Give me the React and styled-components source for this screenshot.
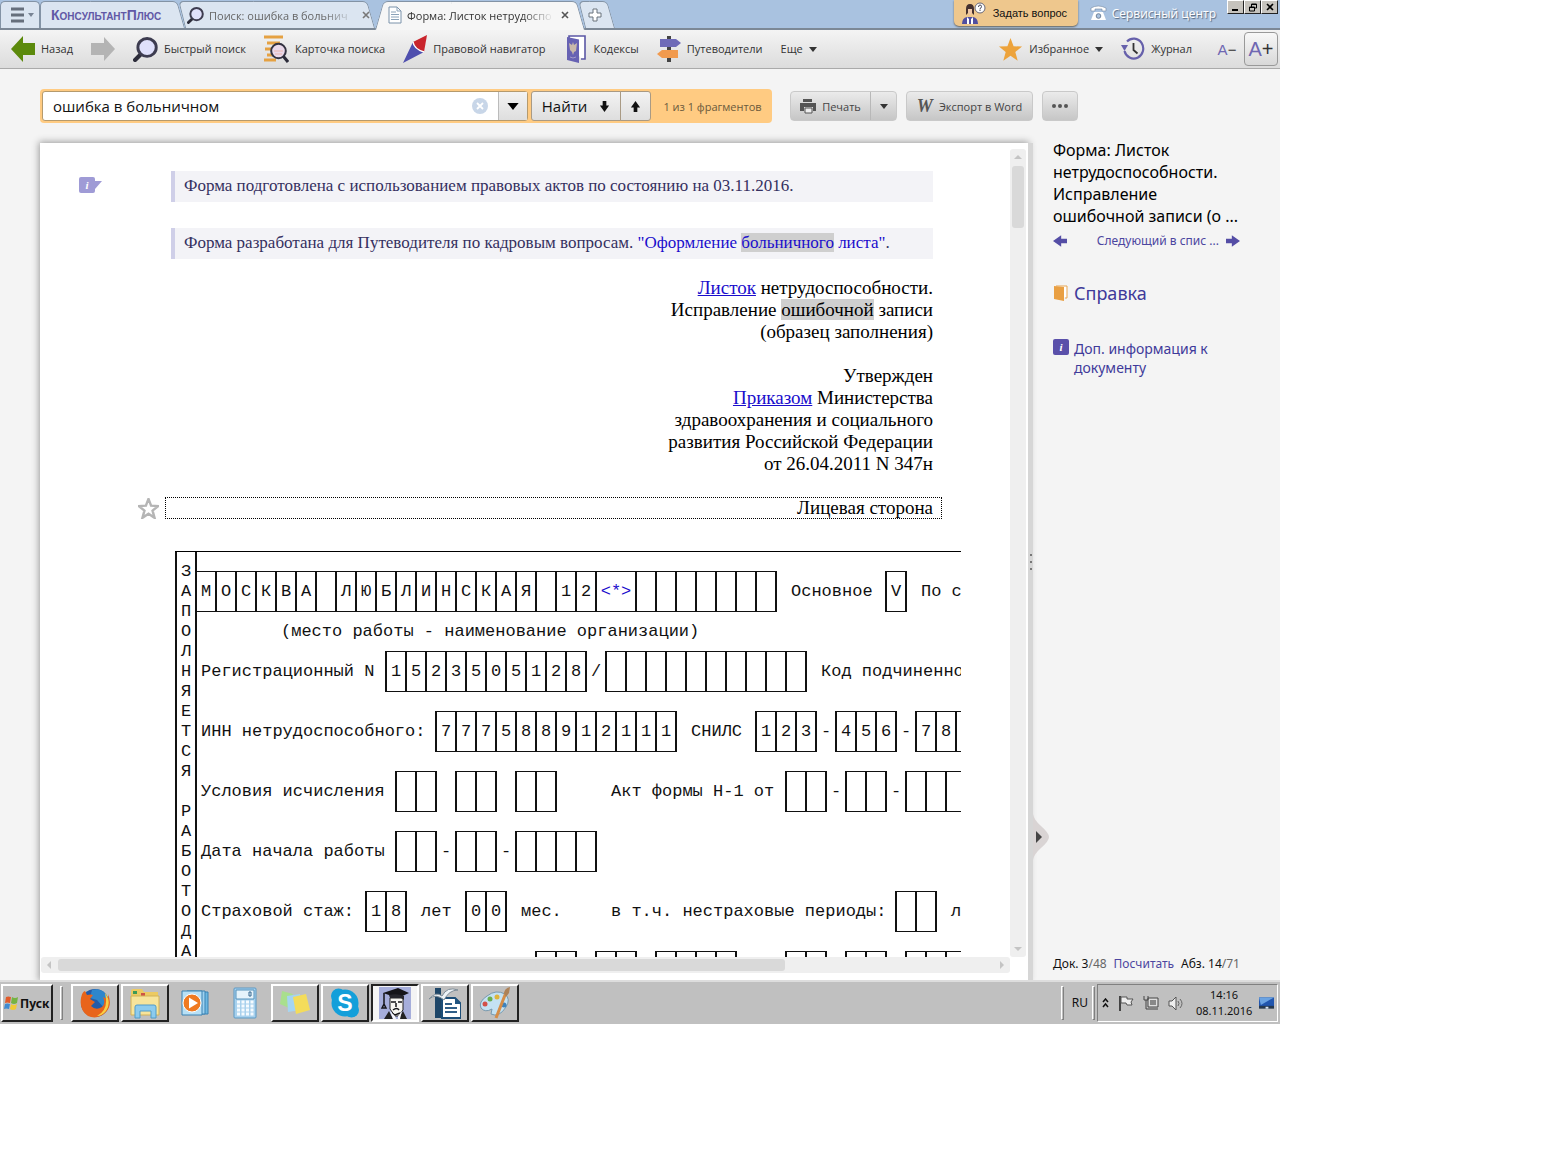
import React from "react";
import styled, { createGlobalStyle, css } from "styled-components";

const ui = `"Open Sans", "Noto Sans", sans-serif`;
const side = `"Noto Sans", "Open Sans", sans-serif`;
const serif = `"Liberation Serif", "Times New Roman", serif`;
const mono = `"Liberation Mono", "Courier New", monospace`;

const GlobalStyle = createGlobalStyle`
  * { box-sizing: border-box; }
  body { margin: 0; background: #fff; font-family: ${ui}; color: #333; }
  button, input { font: inherit; color: inherit; }
  button { padding: 0; border: 0; background: none; cursor: pointer; white-space: nowrap; }
  a { text-decoration: none; }
  svg { display: block; flex: none; }
`;

const Screen = styled.div`
  display: flex;
  flex-direction: column;
  max-width: 1280px;
  height: min(1024px, 100vh);
  background: #f4f4f4;
  overflow: hidden;
`;

/* ---------- title bar ---------- */

const TitleBar = styled.header`
  display: flex;
  flex: none;
  height: 30px;
  background: #a9c2e0;
  border-bottom: 2px solid #7c8896;
`;

const tabBack = css`
  content: "";
  position: absolute;
  z-index: -1;
  top: 1px;
  bottom: ${(p) => (p.$active ? "-2px" : "0")};
  border-top: 1px solid #8393a5;
  background: ${(p) => (p.$active ? "#f6f6f6" : "#dbe5f1")};
`;

const Tab = styled.div`
  position: relative;
  isolation: isolate;
  z-index: ${(p) => (p.$active ? 3 : 1)};
  display: flex;
  align-items: center;
  gap: 5px;
  width: ${(p) => p.$w}px;
  padding-left: ${(p) => p.$pad || 0}px;
  padding-top: 2px;
  font-size: 11px;
  color: ${(p) => (p.$active ? "#333" : "#666")};
  &::before {
    ${tabBack}
    left: 0;
    right: 50%;
    border-left: 1px solid #8393a5;
    border-radius: 5px 0 0 0;
    transform: skewX(${(p) => (p.$straightLeft ? 0 : p.$leanIn ? 14 : -16)}deg);
    transform-origin: bottom;
  }
  &::after {
    ${tabBack}
    right: 0;
    left: 40%;
    border-right: 1px solid #8393a5;
    border-radius: 0 5px 0 0;
    transform: skewX(${(p) => (p.$straight ? 0 : 16)}deg);
    transform-origin: bottom;
  }
`;

const TabText = styled.span`
  width: 144px;
  white-space: nowrap;
  mask-image: linear-gradient(to right, #000 80%, transparent 102%);
`;

const TabClose = styled.button`
  display: grid;
  place-items: center;
  width: 18px;
  height: 18px;
`;

const Brand = styled.span`
  font: bold 14px "Liberation Sans Narrow", "Liberation Sans", sans-serif;
  font-variant: small-caps;
  color: #6158a6;
`;

const TitleRight = styled.div`
  display: flex;
  margin-left: auto;
`;

const AskButton = styled.button`
  display: flex;
  align-items: center;
  gap: 7px;
  width: 124px;
  height: 26px;
  padding-left: 7px;
  background: #eec78d;
  border-radius: 0 0 5px 5px;
  box-shadow: 0 1px 2px #66625a;
  font: 11px "Liberation Sans", Arial, sans-serif;
  color: #111;
`;

const ServiceLink = styled.a`
  display: flex;
  align-items: center;
  gap: 5px;
  height: 26px;
  margin-left: 12px;
  font-size: 12px;
  color: #fff;
  text-shadow: 1px 1px 1px #56677c;
  white-space: nowrap;
`;

const WindowButtons = styled.div`
  display: flex;
  height: 14px;
  margin: 0 2px 0 11px;
`;

const WindowButton = styled.button`
  display: grid;
  place-items: center;
  width: 17px;
  height: 14px;
  background: #c6c3bd;
  border: 1px solid;
  border-color: #fff #222 #222 #fff;
`;

/* ---------- toolbar ---------- */

const Toolbar = styled.nav`
  display: flex;
  flex: none;
  align-items: center;
  height: 39px;
  padding: 0 2px 0 11px;
  background: linear-gradient(#f4f4f4, #dcdcdc);
  border-bottom: 1px solid #aaa;
`;

const Tool = styled.button`
  display: flex;
  align-items: center;
  gap: 6px;
  margin-right: ${(p) => p.$after ?? 18}px;
  font-size: 11px;
  line-height: 20px;
  color: #333;
`;

const Push = styled.div`
  flex: 1;
`;

const SizeButton = styled.button`
  width: 34px;
  height: 34px;
  font: ${(p) => (p.$large ? 20 : 15)}px "Liberation Sans", Arial, sans-serif;
  color: #6f67b2;
  ${(p) =>
    p.$large &&
    css`
      border: 1px solid #999;
      border-radius: 4px;
      background: linear-gradient(#f8f8f8, #d8d8d8);
    `}
  b {
    font-weight: normal;
    color: #333;
  }
`;

/* ---------- search ---------- */

const SearchRow = styled.div`
  display: flex;
  flex: none;
  align-items: center;
  height: 34px;
  margin: 20px 40px;
`;

const SearchForm = styled.form`
  display: flex;
  flex: none;
  align-items: center;
  width: 732px;
  height: 34px;
  padding: 2px;
  margin-right: 18px;
  background: #ffcb82;
  border-radius: 4px;
`;

const Field = styled.div`
  display: flex;
  align-items: center;
  flex: 1;
  height: 30px;
  margin-right: 3px;
  background: #fff;
  border: 1px solid #b59a6d;
  border-radius: 3px;
`;

const SearchInput = styled.input`
  flex: 1;
  min-width: 0;
  height: 28px;
  padding: 0 10px;
  border: 0;
  outline: 0;
  background: none;
  font-size: 15px;
  color: #111;
`;

const ClearButton = styled.button`
  margin-right: 10px;
`;

const grey = css`
  display: flex;
  align-items: center;
  justify-content: center;
  background: linear-gradient(#f3f3f3, #dedede);
`;

const DropButton = styled.button`
  ${grey}
  width: 29px;
  height: 28px;
  border-left: 1px solid #bbb;
`;

const FindButton = styled.button`
  ${grey}
  gap: 12px;
  width: ${(p) => p.$w}px;
  height: 30px;
  border: 1px solid #a99a84;
  border-radius: ${(p) => (p.$end ? "0 3px 3px 0" : "3px 0 0 3px")};
  margin-left: ${(p) => (p.$end ? -1 : 0)}px;
  font-size: 15px;
  color: #111;
`;

const Fragments = styled.span`
  width: 119px;
  padding-left: 4px;
  text-align: center;
  font-size: 11px;
  color: #6b5a3c;
  white-space: nowrap;
`;

const ActionGroup = styled.div`
  display: flex;
  height: 30px;
  margin-right: 9px;
  background: linear-gradient(#ebebeb, #c6c6c6);
  border: 1px solid #c9c9c9;
  border-radius: 4px;
`;

const Action = styled.button`
  display: flex;
  align-items: center;
  justify-content: center;
  gap: 6px;
  width: ${(p) => p.$w}px;
  font-size: 11px;
  color: #444;
  & + & {
    border-left: 1px solid #b8b8b8;
  }
`;

const WordMark = styled.span`
  font: italic bold 18px ${serif};
  color: #555;
`;

/* ---------- workspace ---------- */

const Workspace = styled.main`
  display: flex;
  flex: 1;
  min-height: 0;
  padding-left: 40px;
`;

const Paper = styled.article`
  display: grid;
  flex: 1;
  min-width: 0;
  grid-template-columns: minmax(0, 1fr) 18px;
  grid-template-rows: minmax(0, 1fr) 23px;
  background: #fff;
  box-shadow: 0 0 7px 1px #999;
`;

const Content = styled.div`
  overflow: hidden;
  padding-top: 28px;
`;

const Line = styled.div`
  display: grid;
  grid-template-columns: 131px 762px;
`;

const NoteFlag = styled.button`
  display: flex;
  align-items: center;
  width: 22px;
  height: 16px;
  margin: 6px 0 0 39px;
`;

const InfoBadge = styled.span`
  display: grid;
  place-items: center;
  flex: none;
  width: 16px;
  height: 16px;
  border-radius: 2px;
  background: ${(p) => p.$color};
  font: italic bold 11px ${serif};
  color: #fff;
`;

const Note = styled.p`
  grid-column: 2;
  margin: 0 0 26px;
  padding: 0 9px 2px;
  border-left: 4px solid #cfcfe8;
  background: #f3f3f7;
  font: 17px/29px ${serif};
  color: #35305f;
  white-space: nowrap;
`;

const DocLink = styled.a`
  color: #1a0dcc;
  text-decoration: ${(p) => (p.$plain ? "none" : "underline")};
`;

const Mark = styled.mark`
  background: #cfcfcf;
  color: inherit;
`;

const RightBlock = styled.p`
  grid-column: 2;
  margin: ${(p) => (p.$first ? "-8px" : "0")} 0 22px;
  font: 19px/22px ${serif};
  color: #000;
  text-align: right;
`;

const FaceRow = styled.div`
  display: flex;
  align-items: center;
  width: 902px;
  padding-left: 98px;
  gap: 6px;
`;

const Face = styled.div`
  flex: 1;
  padding-right: 8px;
  border: 1px dotted #000;
  font: 19px/20px ${serif};
  color: #000;
  text-align: right;
`;

/* ---------- pre-drawn form ---------- */

const Sheet = styled.section`
  display: flex;
  width: 786px;
  margin: 32px 0 0 135px;
  border-top: 1px solid #000;
  overflow: hidden;
  font: 17px/20px ${mono};
  color: #111;
`;

const Spine = styled.div`
  display: flex;
  flex: none;
  flex-direction: column;
  align-items: center;
  width: 22px;
  padding-top: 10px;
  border: solid #111;
  border-width: 0 2px;
`;

const SpineLetter = styled.span`
  height: 20px;
`;

const SheetBody = styled.div`
  flex: 1;
  min-width: 0;
  margin-left: -2px;
  padding-top: 19px;
`;

const FormRow = styled.div`
  display: grid;
  grid-template-columns: repeat(84, 10px);
  align-items: center;
  height: ${(p) => (p.$short ? 39 : 41)}px;
  margin-bottom: ${(p) => p.$after ?? 19}px;
`;

const FormText = styled.span`
  grid-row: 1;
  grid-column: ${(p) => p.$at + 1} / span ${(p) => p.$len};
  margin-left: 6px;
  white-space: pre;
`;

const Boxes = styled.span`
  display: flex;
  grid-row: 1;
  grid-column: ${(p) => p.$at + 1} / span ${(p) => p.$len};
  height: 41px;
  margin-right: -2px;
  border: solid #111;
  border-width: 1px 2px 1px 0;
`;

const Box = styled.span`
  display: grid;
  place-items: center;
  flex: none;
  width: ${(p) => (p.$wide ? 40 : 20)}px;
  border-left: 2px solid #111;
  color: ${(p) => (p.$wide ? "#1a0dcc" : "inherit")};
`;

/* ---------- scroll bars ---------- */

const VScroll = styled.div`
  display: flex;
  flex-direction: column;
  align-items: center;
  justify-content: space-between;
  width: 16px;
  margin: 6px 0 0;
  background: #efefef;
  border-radius: 3px;
`;

const HScroll = styled.div`
  display: flex;
  align-items: center;
  justify-content: space-between;
  height: 16px;
  margin-left: 1px;
  background: #efefef;
  border-radius: 3px;
`;

const ScrollArrow = styled.button`
  display: grid;
  place-items: center;
  flex: none;
  width: 16px;
  height: 16px;
`;

const Thumb = styled.div`
  width: ${(p) => p.$w};
  height: ${(p) => p.$h};
  margin: ${(p) => (p.$vertical ? "1px 0 auto" : "0 auto 0 1px")};
  border-radius: 3px;
  background: #d9d9d9;
`;

const Splitter = styled.div`
  position: relative;
  z-index: 2;
  display: flex;
  flex: none;
  flex-direction: column;
  align-items: center;
  justify-content: center;
  gap: 5px;
  width: 5px;
  background: #d6d6d6;
`;

const Dot = styled.i`
  width: 2px;
  height: 2px;
  background: #777;
`;

const Collapse = styled.button`
  position: absolute;
  left: 5px;
  bottom: 120px;
`;

/* ---------- sidebar ---------- */

const Sidebar = styled.aside`
  display: flex;
  flex: none;
  flex-direction: column;
  width: 247px;
  padding: 0 40px 6px 20px;
  font-family: ${side};
`;

const DocTitle = styled.h1`
  margin: -4px 0 0;
  font: 16px/22px ${side};
  color: #000;
  white-space: nowrap;
`;

const Pager = styled.div`
  display: flex;
  align-items: center;
  margin-top: 5px;
  font-size: 12px;
  line-height: 18px;
`;

const SideLink = styled.a`
  color: #4c46a0;
  white-space: nowrap;
`;

const PagerText = styled(SideLink)`
  margin: 0 7px 0 auto;
`;

const SideItem = styled.a`
  display: flex;
  align-items: ${(p) => (p.$large ? "center" : "flex-start")};
  gap: 5px;
  margin-top: ${(p) => (p.$large ? 31 : 34)}px;
  font-size: ${(p) => (p.$large ? 18 : 14)}px;
  line-height: ${(p) => (p.$large ? 24 : 19)}px;
  color: #3f3a9a;
`;

const Counters = styled.div`
  display: flex;
  justify-content: space-between;
  margin-top: auto;
  font-size: 12px;
  line-height: 20px;
  color: #111;
  white-space: nowrap;
  i {
    font-style: normal;
    color: #666;
  }
`;

/* ---------- task bar ---------- */

const TaskBar = styled.footer`
  display: flex;
  flex: none;
  align-items: center;
  height: 44px;
  padding: 0 2px 0 1px;
  border-top: 2px solid #ddd;
  background: #c0c0c0;
`;

const raised = css`
  border: 2px solid;
  border-color: #fff #222 #222 #fff;
`;

const StartButton = styled.button`
  ${raised}
  display: flex;
  align-items: center;
  gap: 1px;
  width: 52px;
  height: 38px;
  font: bold 12px ${side};
  color: #111;
`;

const Ridge = styled.i`
  width: 3px;
  height: 34px;
  margin: 0 ${(p) => p.$r}px 0 ${(p) => p.$l}px;
  border: 1px solid;
  border-color: #fff #808080 #808080 #fff;
`;

const Task = styled.button`
  display: grid;
  place-items: center;
  width: 48px;
  height: 38px;
  margin-right: 2px;
  ${(p) => !p.$flat && raised}
  ${(p) =>
    p.$pressed &&
    css`
      background: #f4f4f4;
      border-color: #222 #fff #fff #222;
    `}
`;

const Lang = styled.span`
  font: 12px/20px ${side};
  color: #111;
`;

const Tray = styled.div`
  display: flex;
  align-items: center;
  width: 181px;
  height: 38px;
  padding-left: 4px;
  border: 1px solid;
  border-color: #808080 #fff #fff #808080;
  gap: 9px;
`;

const Clock = styled.time`
  margin: 0 -2px 0 4px;
  font: 11px/16px ${side};
  color: #111;
  text-align: center;
`;

/* ---------- drawings ---------- */

const Caret = ({ size = 8, color = "#333" }) => (
  <svg width={size} height={size / 2 + 1} viewBox="0 0 8 5">
    <path d="M0 0h8L4 5z" fill={color} />
  </svg>
);

const Magnifier = ({ size = 16 }) => (
  <svg width={size} height={size} viewBox="0 0 24 24">
    <path d="M7.5 16.5 2 22" stroke="#2c2c3a" strokeWidth="4" strokeLinecap="round" />
    <ellipse cx="13.5" cy="10" rx="8.8" ry="8.6" fill="#dfe0fb" stroke="#3d3c50" strokeWidth="2.8" />
  </svg>
);

const Cross = ({ color = "#777" }) => (
  <svg width="8" height="8" viewBox="0 0 8 8">
    <path d="M1 1l6 6M7 1L1 7" stroke={color} strokeWidth="1.6" />
  </svg>
);

const SheetIcon = () => (
  <svg width="14" height="18" viewBox="0 0 14 18">
    <path d="M1 1h8l4 4v12H1z" fill="#fff" stroke="#7a92aa" />
    <path d="M9 1v4h4M3 6h5M3 8.500h8M3 11h8M3 13.500h8" stroke="#8ba2b8" fill="none" />
  </svg>
);

const BigArrow = ({ color, flip }) => (
  <svg width="24" height="28" viewBox="0 0 24 28">
    <path
      d={flip ? "M24 14 13 2v6H0v12h13v6z" : "M0 14 12 1v7h12v12H12v7z"}
      fill={color}
    />
  </svg>
);

const CardIcon = () => (
  <svg width="25" height="28" viewBox="0 0 25 28">
    <path d="M0 2h19M3 8h13M1 14h9M3 20h7M0 25h12" stroke="#e5a142" strokeWidth="3" />
    <circle cx="14.500" cy="16" r="7.300" fill="#ead9ea" stroke="#333241" strokeWidth="2" />
    <path d="M10 16h9M11 19h7" stroke="#eab5ae" strokeWidth="1" />
    <path d="M19.500 21.500 24 27" stroke="#2c2c3a" strokeWidth="3" />
  </svg>
);

const CompassIcon = () => (
  <svg width="24" height="28" viewBox="0 0 24 28">
    <path d="M24 0 10 7q1 7 11 10z" fill="#c9242c" />
    <path d="M10 7Q11 14 21 17L0 28z" fill="#4f4fae" />
    <path d="M10 7q1 7 11 10" stroke="#fff" strokeWidth="1.500" fill="none" />
  </svg>
);

const CodexIcon = () => (
  <svg width="22" height="28" viewBox="0 0 22 28">
    <path d="M3 3V1h16v23h-4" fill="#fff" stroke="#5b57a5" strokeWidth="1.600" />
    <path d="M1 2l12 2.500V28L1 25z" fill="#6762b3" />
    <path d="M7 7l1 3 3-2-1 8-2 1-1 3-1-3-2-2-1-7 3 2z" fill="#c9b9aa" />
    <path d="M4 22q3 2 6 0" stroke="#a49cc8" fill="none" />
  </svg>
);

const SignIcon = () => (
  <svg width="24" height="26" viewBox="0 0 24 26">
    <path d="M12 0v26" stroke="#444" strokeWidth="4" />
    <path d="M3 3h16l5 4-5 4H3z" fill="#6f6bb8" />
    <path d="M21 14H5l-5 4 5 4h16z" fill="#f19a4e" />
  </svg>
);

const starPath = "M12 0l3.200 8.500 8.800.5-7 5.600 2.500 9L12 18.500 4.500 23.600l2.500-9L0 9l8.800-.5z";
const Star = ({ size = 25, fill = "#eda33b", stroke }) => (
  <svg width={size} height={size} viewBox="-1 -1 26 26">
    <path d={starPath} fill={fill} stroke={stroke} strokeWidth={stroke ? 3 : 0} />
  </svg>
);

const HistoryIcon = () => (
  <svg width="24" height="24" viewBox="0 0 24 24">
    <path d="M3.500 14A9.500 10 0 1 0 6 4.500" fill="none" stroke="#6660ab" strokeWidth="2.200" />
    <path d="M0 8h7l-3.500 6z" fill="#6660ab" />
    <path d="M12.500 6v7l4 3.500" fill="none" stroke="#333" strokeWidth="1.800" />
  </svg>
);

const PersonIcon = () => (
  <svg width="25" height="24" viewBox="0 0 25 24">
    <path d="M5 14V8q0-5 4-5 4 0 4 5v6l-2-2V8H7v4z" fill="#45312f" />
    <path d="M7 8h4v4l-2 2-2-2z" fill="#f0c8a8" />
    <path d="M1 23q0-6 5-7h6q5 1 5 7z" fill="#504ea0" />
    <path d="M6 16l3 3 3-3v7H6z" fill="#fff" />
    <path d="M8 18h2v5H8z" fill="#504ea0" />
    <circle cx="19" cy="7" r="5" fill="#fff" stroke="#667" />
    <path d="M17.500 6q0-2 1.500-2t1.500 1.500Q20.500 7 19 7.500v1M19 9v1" stroke="#445" fill="none" />
  </svg>
);

const PhoneIcon = () => (
  <svg width="17" height="16" viewBox="0 0 17 16">
    <path d="M1 6V3q7-4 15 0v3h-4V4H5v2z" fill="#fff" stroke="#7488a1" strokeWidth=".6" />
    <path d="M4 7h9l3 8H1z" fill="#fff" />
    <circle cx="8.500" cy="11" r="2.300" fill="#a9c2e0" stroke="#70839b" />
  </svg>
);

const FatArrow = ({ dir = "down", color = "#111", w = 11 }) => (
  <svg width={w} height={w} viewBox="0 0 12 12">
    <path
      transform={`rotate(${{ down: 0, left: 90, up: 180, right: 270 }[dir]} 6 6)`}
      d="M4 0h4v5h3l-5 7-5-7h3z"
      fill={color}
    />
  </svg>
);

const ClearIcon = () => (
  <svg width="16" height="16" viewBox="0 0 16 16">
    <circle cx="8" cy="8" r="8" fill="#c8d6e8" />
    <path d="M5 5l6 6M11 5l-6 6" stroke="#fff" strokeWidth="1.800" />
  </svg>
);

const PrinterIcon = () => (
  <svg width="16" height="15" viewBox="0 0 16 15">
    <path d="M3 0h9v3H3z" fill="#555" />
    <path d="M0 4h16v8h-3V8H4v4H0z" fill="#555" />
    <path d="M5 9h7v5H5z" fill="#eee" stroke="#555" />
  </svg>
);

const BookIcon = () => (
  <svg width="16" height="17" viewBox="0 0 16 17">
    <path d="M3 1h11v12h-2" fill="#fff" stroke="#e7a553" />
    <path d="M1 1l10 1v14L1 14z" fill="#e99f42" />
  </svg>
);

const icon = { width: 32, height: 32, viewBox: "0 0 32 32" };

const Firefox = () => (
  <svg {...icon}>
    <circle cx="16" cy="16" r="14" fill="#245ba8" />
    <path d="M13 3q10-3 15 6l-3 12-7-8-7-2z" fill="#2d86cc" />
    <path d="M2 11Q3 5 6 4l2 4q4-1 6 0l-3 4 5 3-4 4q5 5 11 1 4-4 1-10 6 4 5-3 5 12-3 19-8 7-17 3Q0 23 2 11z" fill="#e8641b" />
    <path d="M26 6q7 9 1 18-4 5-9 5 10-5 9-17z" fill="#f8cf45" />
  </svg>
);

const Folder = () => (
  <svg {...icon}>
    <path d="M2 4q0-2 2-2h9l2 3h14v22H2z" fill="#ecca62" />
    <path d="M4 4h4v3H4z" fill="#3d9a57" />
    <path d="M12 6h4v3h-4z" fill="#cf5346" />
    <path d="M2 9h28v19H2z" fill="#f7e49b" stroke="#d2b257" />
    <path d="M6 31V20q0-2 2-2h17q2 0 2 2v11h-5v-7H11v7z" fill="#8ccbee" stroke="#519cc9" />
  </svg>
);

const Media = () => (
  <svg {...icon}>
    <path d="M12 5h17v22H12z" fill="#6db8e2" stroke="#3a82b3" />
    <path d="M8 4h18v23H8z" fill="#9ed1ef" stroke="#3a82b3" />
    <path d="M3 4h20v24H3z" fill="#b8e0f5" stroke="#3a82b3" />
    <circle cx="13" cy="16" r="9" fill="#ef7a21" stroke="#fff" />
    <path d="M10 10.500v11l9-5.500z" fill="#fff" />
  </svg>
);

const Calc = () => (
  <svg {...icon}>
    <rect x="5" y="1" width="22" height="30" rx="1" fill="#a8d1ed" stroke="#5a99c5" />
    <path d="M7 3h18v9H7z" fill="#e5f3fb" stroke="#5793bc" />
    <path d="M20 5h2v4h-2z" fill="none" stroke="#35678e" />
    {[15, 19, 23, 27].map((y) => (
      <path key={y} d={`M8 ${y}h17`} stroke="#f5fbff" strokeWidth="3" strokeDasharray="3 1.500" />
    ))}
  </svg>
);

const Notes = () => (
  <svg {...icon}>
    <path d="M3 4l11 3-4 14L1 17z" fill="#a9df8d" />
    <path d="M8 9l13-2 1 16-13 2z" fill="#a5d5f1" />
    <path d="M14 10l13-3 4 16-14 4z" fill="#f4dc5a" />
  </svg>
);

const Skype = () => (
  <svg {...icon}>
    <circle cx="16" cy="16" r="13.500" fill="#139fda" />
    <circle cx="9.500" cy="9" r="7.500" fill="#139fda" />
    <circle cx="22.500" cy="23" r="7.500" fill="#139fda" />
    <text x="16" y="24" textAnchor="middle" fontFamily="Liberation Sans, sans-serif" fontWeight="bold" fontSize="23" fill="#fff">S</text>
  </svg>
);

const Graduate = () => (
  <svg {...icon}>
    <path d="M0 0h32v32H0z" fill="#a6aedb" />
    <path d="M11 11h13v12l-5 6h-3l-5-7z" fill="#f7f6f2" stroke="#222" />
    <path d="M4 6 19 1l11 5-11 5z" fill="#151519" />
    <path d="M10 8q8-2 15 1v4l-3-2H11z" fill="#26262c" />
    <path d="M5 6v11l-2 4h4l-2-4M12 15h5m2 0h4M17 16v4M14 23q4-3 6 0M13 26l3 2 5-2" stroke="#151519" strokeWidth="1.500" fill="none" />
    <path d="M10 24l4 8H5zM24 24l-5 8h9z" fill="#222" />
    <path d="M11 24l5 5 1 3h-3zM23 24l-4 5v3h2z" fill="#f5f5fa" />
  </svg>
);

const Writer = () => (
  <svg {...icon}>
    <path d="M6 1h6v30H6z" fill="#1e4668" />
    <path d="M13 11h13l6 6v14H13z" fill="#fff" stroke="#1d4e78" strokeWidth="2" />
    <path d="M26 11v6h6z" fill="#205481" />
    <path d="M16 17h7M16 21h12M16 25h12" stroke="#315f88" strokeWidth="2" />
    <path d="M0 12q7-8 13-3Q18-1 29 3 20 3 15 13 7 6 0 12z" fill="#eef3f7" stroke="#7e8b96" />
  </svg>
);

const Paint = () => (
  <svg {...icon}>
    <path d="M8 9q9-7 18-2 6 5 1 13-7 11-15 7l1-5q-7 4-11-1-3-6 6-12z" fill="#c4e2f3" stroke="#7899ae" />
    <circle cx="6" cy="17" r="2.500" fill="#d35049" />
    <circle cx="11" cy="12" r="2.500" fill="#6bae4f" />
    <circle cx="18" cy="10" r="2.500" fill="#dfb43b" />
    <circle cx="25" cy="18" r="2.500" fill="#3d82bd" />
    <path d="M28 3 17 31" stroke="#d58d48" strokeWidth="3" />
    <path d="M25 6q1-5 6-6l-1 6-3 4z" fill="#ad8258" />
  </svg>
);

const WindowsFlag = () => (
  <svg width="16" height="15" viewBox="0 0 16 15">
    <path d="M3 1q2-1 5 0L7 7Q4 6 2 7z" fill="#e25b2a" />
    <path d="M9 1q3 2 6 0l-1 6q-3 2-6 0z" fill="#75b342" />
    <path d="M2 8q2-1 5 0l-1 5q-3-1-5 0z" fill="#408bd1" />
    <path d="M8 8q3 2 6 0l-1 5q-3 2-6 0z" fill="#f0ca36" />
  </svg>
);

const TrayFlag = () => (
  <svg width="16" height="16" viewBox="0 0 16 16">
    <path d="M2 1v15" stroke="#444" strokeWidth="2" />
    <path d="M3 2h6v2h6l-2 3 1 3H9L8 8H3z" fill="#eee" stroke="#555" />
  </svg>
);

const Network = () => (
  <svg width="16" height="16" viewBox="0 0 16 16">
    <path d="M5 3h10v9H5zM7 14h8" fill="#ddd" stroke="#444" />
    <path d="M7 5h6v5H7z" fill="#888" />
    <path d="M1 1v4h4V1M3 5v9h4" fill="none" stroke="#444" />
  </svg>
);

const Speaker = () => (
  <svg width="15" height="15" viewBox="0 0 15 15">
    <path d="M1 5h3l4-4v13l-4-4H1z" fill="#eee" stroke="#555" />
    <path d="M10 5q2 2.500 0 5M12 3q4 4.500 0 9" fill="none" stroke="#666" />
  </svg>
);

const Monitor = () => (
  <svg width="15" height="13" viewBox="0 0 16 13">
    <path d="M0 0h16v11H0z" fill="#2156ae" />
    <path d="M0 0h16L2 8z" fill="#6ba3e2" />
    <path d="M0 9h16v3H0z" fill="#26394f" />
    <path d="M7 10h3v2H7z" fill="#dce6f2" />
  </svg>
);

const ScrollMark = ({ rotate }) => (
  <svg width="8" height="8" viewBox="0 0 8 8">
    <path transform={`rotate(${rotate} 4 4)`} d="M0 6l4-4 4 4z" fill="#c4c4c4" />
  </svg>
);

/* ---------- data ---------- */

const tools = [
  ["Назад", <BigArrow color="#5c8a0c" />],
  ["", <BigArrow color="#b4b4b4" flip />],
  ["Быстрый поиск", <Magnifier size={25} />],
  ["Карточка поиска", <CardIcon />],
  ["Правовой навигатор", <CompassIcon />, 20],
  ["Кодексы", <CodexIcon />],
  ["Путеводители", <SignIcon />],
];

/* Each part is [column, text] or [column, cells in the box group, true]. */
const rows = [
  {
    after: 0,
    parts: [
      [0, [..."МОСКВА ЛЮБЛИНСКАЯ 12", "<*>", ..."       "], true],
      [59, "Основное"],
      [69, ["V"], true],
      [72, "По с"],
    ],
  },
  { short: true, after: 0, parts: [[8, "(место работы - наименование организации)"]] },
  {
    parts: [
      [0, "Регистрационный N"],
      [19, [..."1523505128"], true],
      [39, "/"],
      [41, [..."          "], true],
      [62, "Код подчиненно"],
    ],
  },
  {
    parts: [
      [0, "ИНН нетрудоспособного:"],
      [24, [..."777588912111"], true],
      [49, "СНИЛС"],
      [56, [..."123"], true],
      [62, "-"],
      [64, [..."456"], true],
      [70, "-"],
      [72, [..."78 "], true],
    ],
  },
  {
    parts: [
      [0, "Условия исчисления"],
      [20, [..."  "], true],
      [26, [..."  "], true],
      [32, [..."  "], true],
      [41, "Акт формы Н-1 от"],
      [59, [..."  "], true],
      [63, "-"],
      [65, [..."  "], true],
      [69, "-"],
      [71, [..."    "], true],
    ],
  },
  {
    parts: [
      [0, "Дата начала работы"],
      [20, [..."  "], true],
      [24, "-"],
      [26, [..."  "], true],
      [30, "-"],
      [32, [..."    "], true],
    ],
  },
  {
    parts: [
      [0, "Страховой стаж:"],
      [17, [..."18"], true],
      [22, "лет"],
      [27, [..."00"], true],
      [32, "мес."],
      [41, "в т.ч. нестраховые периоды:"],
      [70, [..."  "], true],
      [75, "л"],
    ],
  },
  {
    parts: [
      [34, [..."  "], true],
      [40, [..."  "], true],
      [46, [..."    "], true],
      [59, [..."  "], true],
      [65, [..."  "], true],
      [71, [..."    "], true],
    ],
  },
];

const tasks = [
  ["Firefox", <Firefox />],
  ["Проводник", <Folder />],
  ["Медиа", <Media />, "flat"],
  ["Калькулятор", <Calc />, "flat"],
  ["Заметки", <Notes />],
  ["Skype", <Skype />],
  ["КонсультантПлюс", <Graduate />, "pressed"],
  ["Writer", <Writer />],
  ["Paint", <Paint />],
];

function FormPart({ part: [at, value, boxed] }) {
  if (!boxed) {
    return <FormText $at={at} $len={value.length}>{value}</FormText>;
  }
  const units = value.reduce((n, c) => n + (c.length > 1 ? 4 : 2), 0);
  return (
    <Boxes $at={at} $len={units}>
      {value.map((c, i) => (
        <Box key={i} $wide={c.length > 1}>{c.trim()}</Box>
      ))}
    </Boxes>
  );
}

export default function App() {
  return (
    <>
      <GlobalStyle />
      <Screen>
        <TitleBar>
          <Tab $w={40} $pad={11} $straight $straightLeft>
            <svg width="23" height="16" viewBox="0 0 23 16">
              <path d="M0 2h13M0 8h13M0 14h13" stroke="#666f7c" strokeWidth="3" />
              <path d="M17 6h6l-3 4z" fill="#788494" />
            </svg>
          </Tab>
          <Tab $w={145} $pad={11} $straightLeft>
            <Brand>КонсультантПлюс</Brand>
          </Tab>
          <Tab $w={190} $pad={2} $leanIn>
            <Magnifier size={17} />
            <TabText>Поиск: ошибка в больнич</TabText>
            <TabClose aria-label="Закрыть"><Cross /></TabClose>
          </Tab>
          <Tab $w={210} $pad={13} $active>
            <SheetIcon />
            <TabText>Форма: Листок нетрудоспо</TabText>
            <TabClose aria-label="Закрыть"><Cross color="#555" /></TabClose>
          </Tab>
          <Tab $w={30} $pad={3} $leanIn>
            <svg width="14" height="14" viewBox="0 0 14 14">
              <path d="M5 1h4v4h4v4H9v4H5V9H1V5h4z" fill="#fff" stroke="#69727c" />
            </svg>
          </Tab>
          <TitleRight>
            <AskButton><PersonIcon />Задать вопрос</AskButton>
            <ServiceLink href="#service"><PhoneIcon />Сервисный центр</ServiceLink>
            <WindowButtons>
              <WindowButton aria-label="Свернуть">
                <svg width="10" height="9"><path d="M1 7h6" stroke="#000" strokeWidth="2" /></svg>
              </WindowButton>
              <WindowButton aria-label="Восстановить">
                <svg width="10" height="9" fill="none" stroke="#000">
                  <path d="M3.500 4V1h5v4H6M1.500 4h5v4h-5zM3 1.500h6M1 4.500h6" />
                </svg>
              </WindowButton>
              <WindowButton aria-label="Закрыть"><Cross color="#000" /></WindowButton>
            </WindowButtons>
          </TitleRight>
        </TitleBar>

        <Toolbar>
          {tools.map(([label, glyph, after], i) => (
            <Tool key={i} $after={after} aria-label={label || "Вперед"}>
              {glyph}
              {label && <span>{label}</span>}
            </Tool>
          ))}
          <Tool>Еще <Caret /></Tool>
          <Push />
          <Tool><Star />Избранное <Caret /></Tool>
          <Tool><HistoryIcon />Журнал</Tool>
          <SizeButton aria-label="Уменьшить шрифт">A<b>−</b></SizeButton>
          <SizeButton $large aria-label="Увеличить шрифт">A<b>+</b></SizeButton>
        </Toolbar>

        <SearchRow>
          <SearchForm onSubmit={(e) => e.preventDefault()}>
            <Field>
              <SearchInput aria-label="Поиск" defaultValue="ошибка в больничном" />
              <ClearButton type="button" aria-label="Очистить"><ClearIcon /></ClearButton>
              <DropButton type="button" aria-label="История"><Caret size={12} color="#000" /></DropButton>
            </Field>
            <FindButton $w={90}>Найти <FatArrow /></FindButton>
            <FindButton $w={31} $end type="button" aria-label="Назад"><FatArrow dir="up" /></FindButton>
            <Fragments>1 из 1 фрагментов</Fragments>
          </SearchForm>
          <ActionGroup>
            <Action $w={79}><PrinterIcon />Печать</Action>
            <Action $w={26} aria-label="Параметры печати"><Caret /></Action>
          </ActionGroup>
          <ActionGroup>
            <Action $w={125}><WordMark>W</WordMark>Экспорт в Word</Action>
          </ActionGroup>
          <ActionGroup>
            <Action $w={34} aria-label="Ещё">
              <svg width="16" height="4" fill="#555">
                <circle cx="2" cy="2" r="2" /><circle cx="8" cy="2" r="2" /><circle cx="14" cy="2" r="2" />
              </svg>
            </Action>
          </ActionGroup>
        </SearchRow>

        <Workspace>
          <Paper>
            <Content>
              <Line>
                <NoteFlag aria-label="Примечание">
                  <InfoBadge $color="#9f9bd6">i</InfoBadge>
                  <svg width="7" height="8"><path d="M0 0h7L0 8z" fill="#9f9bd6" /></svg>
                </NoteFlag>
                <Note>Форма подготовлена с использованием правовых актов по состоянию на 03.11.2016.</Note>
                <Note>
                  Форма разработана для Путеводителя по кадровым вопросам.{" "}
                  <DocLink $plain href="#list">"Оформление <Mark>больничного</Mark> листа"</DocLink>.
                </Note>
                <RightBlock $first>
                  <DocLink href="#form">Листок</DocLink> нетрудоспособности.<br />
                  Исправление <Mark>ошибочной</Mark> записи<br />
                  (образец заполнения)
                </RightBlock>
                <RightBlock>
                  Утвержден<br />
                  <DocLink href="#order">Приказом</DocLink> Министерства<br />
                  здравоохранения и социального<br />
                  развития Российской Федерации<br />
                  от 26.04.2011 N 347н
                </RightBlock>
              </Line>
              <FaceRow>
                <Star size={21} fill="#fff" stroke="#b5b5b5" />
                <Face>Лицевая сторона</Face>
              </FaceRow>
              <Sheet>
                <Spine>
                  {[..."ЗАПОЛНЯЕТСЯ РАБОТОДА"].map((c, i) => (
                    <SpineLetter key={i}>{c}</SpineLetter>
                  ))}
                </Spine>
                <SheetBody>
                  {rows.map((row, i) => (
                    <FormRow key={i} $short={row.short} $after={row.after}>
                      {row.parts.map((part, j) => (
                        <FormPart key={j} part={part} />
                      ))}
                    </FormRow>
                  ))}
                </SheetBody>
              </Sheet>
            </Content>
            <VScroll>
              <ScrollArrow aria-label="Вверх"><ScrollMark rotate={0} /></ScrollArrow>
              <Thumb $vertical $w="12px" $h="62px" />
              <ScrollArrow aria-label="Вниз"><ScrollMark rotate={180} /></ScrollArrow>
            </VScroll>
            <HScroll>
              <ScrollArrow aria-label="Влево"><ScrollMark rotate={270} /></ScrollArrow>
              <Thumb $w="75%" $h="12px" />
              <ScrollArrow aria-label="Вправо"><ScrollMark rotate={90} /></ScrollArrow>
            </HScroll>
          </Paper>
          <Splitter>
            <Dot /><Dot /><Dot />
            <Collapse aria-label="Свернуть панель">
              <svg width="16" height="46" viewBox="0 0 16 46">
                <path d="M0 0q1 6 8 12 8 7 8 11t-8 11q-7 6-8 12z" fill="#d9d4d4" />
                <path d="M3 17v12l6-6z" fill="#444" />
              </svg>
            </Collapse>
          </Splitter>
          <Sidebar>
            <DocTitle>
              Форма: Листок<br />нетрудоспособности.<br />Исправление<br />ошибочной записи (о ...
            </DocTitle>
            <Pager>
              <FatArrow dir="left" color="#544da5" w={14} />
              <PagerText href="#next">Следующий в спис ...</PagerText>
              <FatArrow dir="right" color="#544da5" w={14} />
            </Pager>
            <SideItem $large href="#help"><BookIcon />Справка</SideItem>
            <SideItem href="#info">
              <InfoBadge $color="#5a50aa">i</InfoBadge>
              <span>Доп. информация к документу</span>
            </SideItem>
            <Counters>
              <span>Док. 3<i>/48</i></span>
              <SideLink href="#count">Посчитать</SideLink>
              <span>Абз. 14<i>/71</i></span>
            </Counters>
          </Sidebar>
        </Workspace>

        <TaskBar>
          <StartButton><WindowsFlag />Пуск</StartButton>
          <Ridge $l={7} $r={8} />
          {tasks.map(([name, glyph, kind]) => (
            <Task key={name} aria-label={name} $flat={kind === "flat"} $pressed={kind === "pressed"}>
              {glyph}
            </Task>
          ))}
          <Push />
          <Ridge $l={0} $r={8} />
          <Lang>RU</Lang>
          <Ridge $l={4} $r={2} />
          <Tray>
            <svg width="7" height="10" fill="none" stroke="#111" strokeWidth="1.500">
              <path d="M1 4l2.500-3L6 4M1 9l2.500-3L6 9" />
            </svg>
            <TrayFlag />
            <Network />
            <Speaker />
            <Clock>14:16<br />08.11.2016</Clock>
            <Monitor />
          </Tray>
        </TaskBar>
      </Screen>
    </>
  );
}
